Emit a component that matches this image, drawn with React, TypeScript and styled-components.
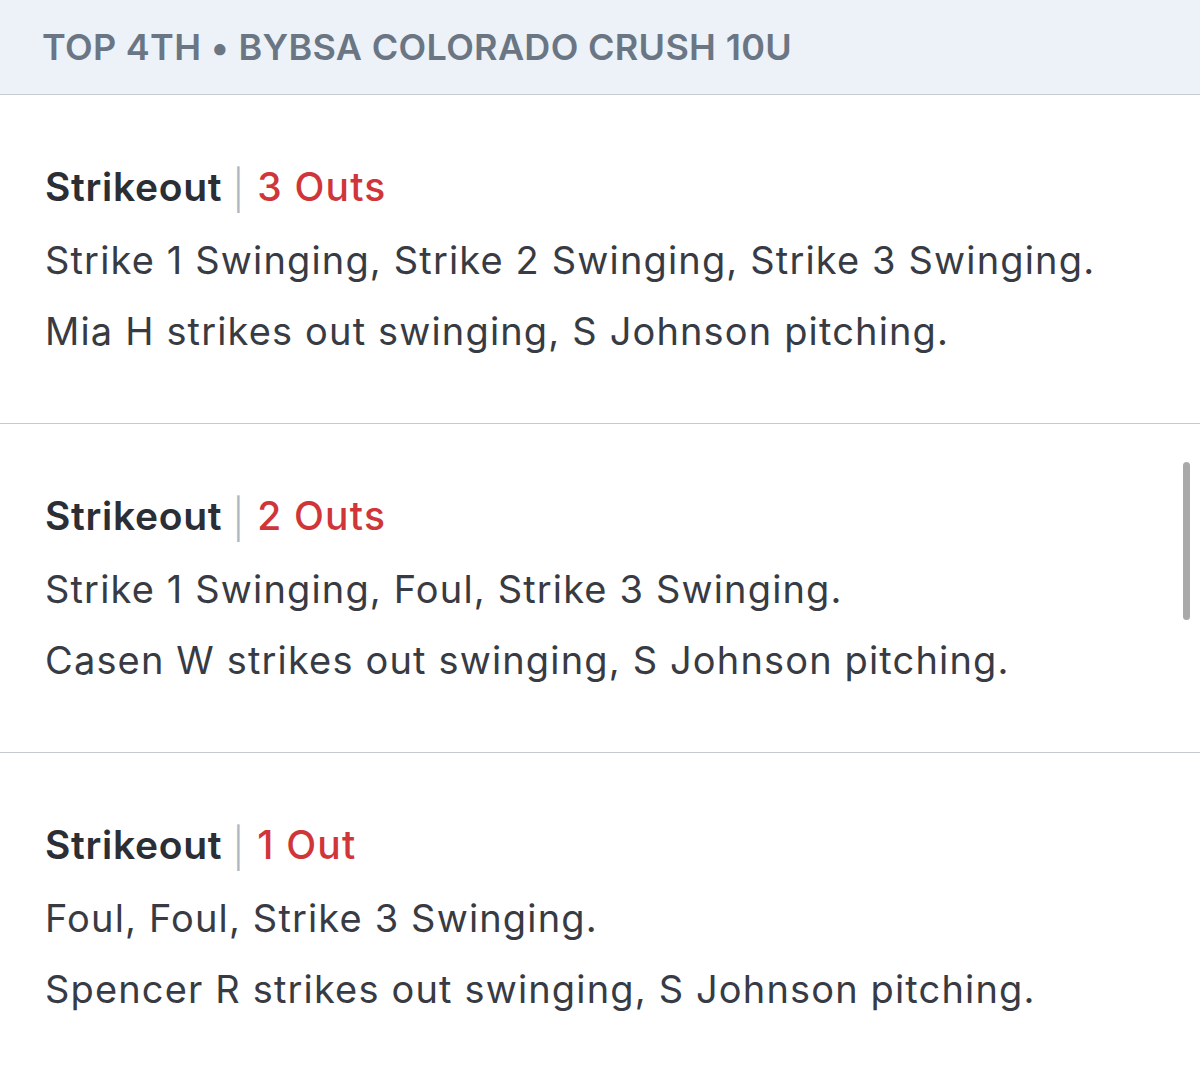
import React from 'react'
import styled, { createGlobalStyle } from 'styled-components';

type Play = {
    result: string;
    outs: string;
    pitches: string;
    summary: string;
}

const plays: Play[] = [
    {
        result: 'Strikeout',
        outs: '3 Outs',
        pitches: 'Strike 1 Swinging, Strike 2 Swinging, Strike 3 Swinging.',
        summary: 'Mia H strikes out swinging, S Johnson pitching.',
    },
    {
        result: 'Strikeout',
        outs: '2 Outs',
        pitches: 'Strike 1 Swinging, Foul, Strike 3 Swinging.',
        summary: 'Casen W strikes out swinging, S Johnson pitching.',
    },
    {
        result: 'Strikeout',
        outs: '1 Out',
        pitches: 'Foul, Foul, Strike 3 Swinging.',
        summary: 'Spencer R strikes out swinging, S Johnson pitching.',
    },
];

const PlayByPlay = () => {
    return (
        <Container>
            <GlobalStyle />
            <HalfInning>TOP 4TH • BYBSA COLORADO CRUSH 10U</HalfInning>
            {plays.map((play, i) => (
                <PlayCard key={i}>
                    <TitleRow>
                        <Result>{play.result}</Result>
                        <Divider>|</Divider>
                        <Outs>{play.outs}</Outs>
                    </TitleRow>
                    <Detail>{play.pitches}</Detail>
                    <Detail>{play.summary}</Detail>
                </PlayCard>
            ))}
            <ScrollThumb />
        </Container>
    )
}

const GlobalStyle = createGlobalStyle`
    body {
        margin: 0;
        background: #ffffff;
        font-family: Inter, "Noto Sans", "Liberation Sans", sans-serif;
    }
`;

const Container = styled.div`
    position: relative;
    width: 1200px;
    height: 1080px;
    overflow: hidden;
    display: flex;
    flex-direction: column;
    background: #ffffff;
`;

const HalfInning = styled.div`
    height: 95px;
    flex-shrink: 0;
    display: flex;
    align-items: center;
    padding: 0 42px 1px;
    box-sizing: border-box;
    background: #edf2f9;
    border-bottom: 1px solid #c5ccd3;
    color: #6b7684;
    font-size: 36px;
    font-weight: 600;
    letter-spacing: 0.3px;
`;

const PlayCard = styled.div`
    height: 329px;
    flex-shrink: 0;
    box-sizing: border-box;
    padding: 68px 45px 0;
    border-bottom: 1px solid #c3cbd0;
    &:first-of-type {
        height: 325px;
        padding-top: 67px;
    }
    &:last-of-type {
        border-bottom-color: #eceef0;
    }
`;

const TitleRow = styled.div`
    display: flex;
    align-items: center;
    height: 48px;
    font-size: 39px;
    line-height: 48px;
    letter-spacing: 0.7px;
    margin-bottom: 14px;
`;

const Result = styled.span`
    color: #2b2e35;
    font-weight: 600;
`;

const Divider = styled.span`
    color: #aeb8c5;
    font-weight: 300;
    margin: 0 12px 0 10px;
    transform: translateY(3px);
`;

const Outs = styled.span`
    color: #d03639;
    font-weight: 500;
    letter-spacing: 1.2px;
`;

const Detail = styled.div`
    color: #383b43;
    font-size: 38px;
    line-height: 71px;
    letter-spacing: 1.15px;
    white-space: nowrap;
`;

const ScrollThumb = styled.div`
    position: absolute;
    top: 462px;
    right: 10px;
    width: 7px;
    height: 158px;
    border-radius: 4px;
    background: #a9a9a9;
`;

export default PlayByPlay;
